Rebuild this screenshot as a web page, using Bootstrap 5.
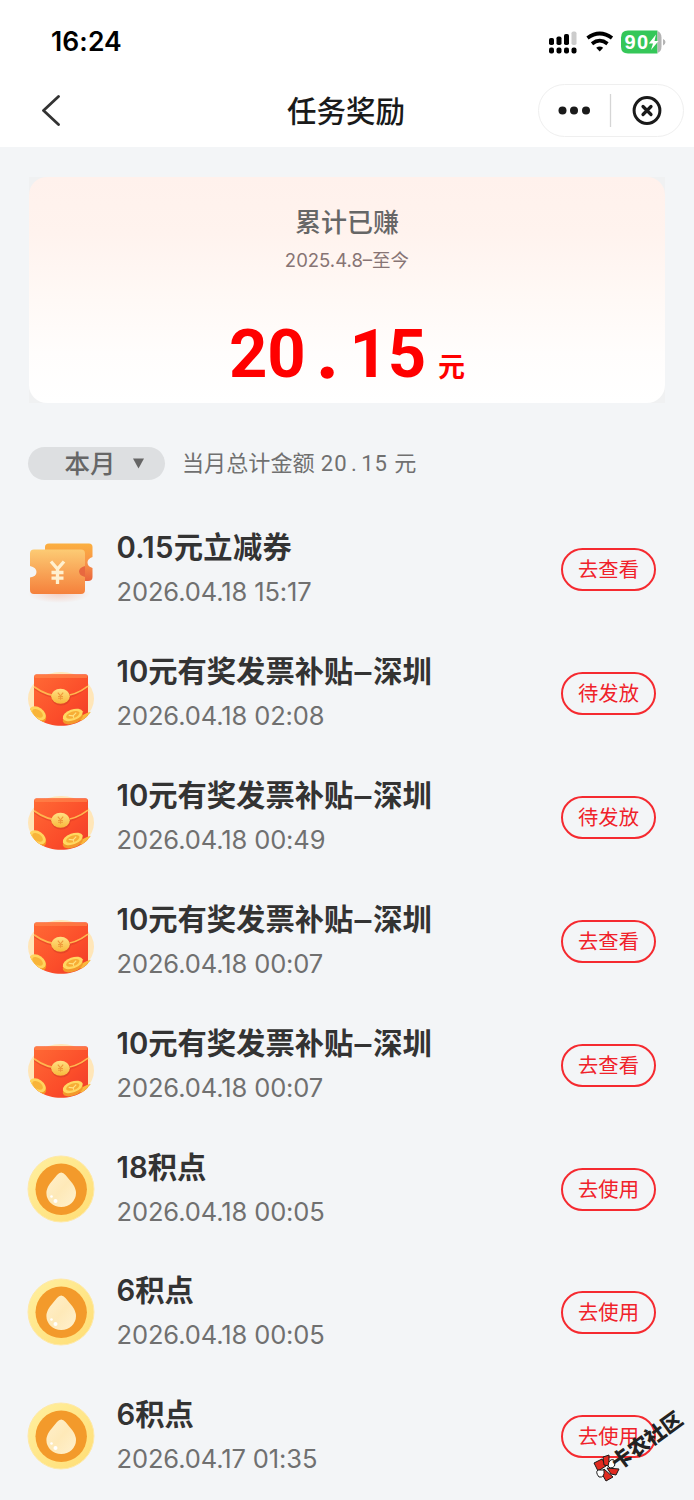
<!DOCTYPE html>
<html lang="zh-CN">
<head>
<meta charset="utf-8">
<meta name="viewport" content="width=device-width, initial-scale=1">
<title>任务奖励</title>
<link href="https://cdn.jsdelivr.net/npm/bootstrap@5.3.0/dist/css/bootstrap.min.css" rel="stylesheet">
<style>
body{background:#f3f5f7;font-family:Inter,"Noto Sans CJK SC",sans-serif;color:#333;line-height:1;overflow-x:hidden}
.screen{width:694px;height:1500px}
.topbar{height:147px}
.status{height:83px;padding:0 28px 0 51px}
.clock{font-size:26.5px;font-weight:600;color:#000;letter-spacing:.1px}
.titlebar{height:54px;margin-top:1px}
.page-title{font-size:29.5px;font-weight:500;color:#1a1a1a;line-height:54px;margin-right:2px}
.back{left:40px;top:11px}
.capsule{right:10px;top:0;width:146px;height:53px;border:1.5px solid #efefef;border-radius:27px}
.earned-wrap{margin:30px 29px 0;background:#f0f1f2;height:226px}
.earned{height:226px;border-radius:18px;background:linear-gradient(#fff1ec 0%,#fff3ee 25%,#fff9f6 55%,#fffdfc 78%,#fff 100%);padding-top:32px}
.earned-label{font-size:26px;line-height:28px;font-weight:500;color:#666}
.earned-since{font-size:18.5px;line-height:24px;margin-top:11px;color:#877474}
.amount{color:#f00;margin-top:37px;height:90px}
.amount-num{font:700 67px/90px Roboto,sans-serif;letter-spacing:-.2px}
.cell-dot{display:inline-block;width:44px;text-align:center;letter-spacing:0;-webkit-text-stroke:2.5px #f00}
.amount-unit{font-size:27px;font-weight:700;margin-left:12px}
.filter{height:33px;margin:44px 28px 0}
.month{width:137px;height:33px;border-radius:17px;background:#dddfe1;color:#666;font-size:25.5px;font-weight:500;padding-left:36.5px}
.tri{width:11px;height:11px;margin-left:17px;margin-top:-1px}
.sum{font-size:22.1px;margin-left:17px;color:#707070;white-space:pre}
.sum-num{font-family:Roboto,sans-serif;letter-spacing:1px}
.sum-dot{display:inline-block;width:13.500px;text-align:center}
.tasks{margin-top:27.3px}
.task{height:123.87px;padding:0 38px 0 27px}
.task-icon{width:68px;height:80px;margin-top:22px}
.task-body{margin-left:21.5px;padding-top:20px}
.task-name{font-size:29.3px;line-height:42px;font-weight:600;white-space:nowrap}
.short-name{letter-spacing:.3px}
.dash{display:inline-block;width:20px;text-align:center;transform:scaleX(1.15)}
.task-time{font-size:25.5px;line-height:30px;letter-spacing:-.12px;margin-top:8px;color:#707070;white-space:nowrap}
.btn-task{width:95px;height:43px;margin-top:41px;border:2px solid #f52a30;border-radius:22px;color:#f0222a;font-size:20.3px;line-height:39px;padding:0}
.mark-layer{left:585px;top:1395px;width:109px;height:100px;pointer-events:none}
.mark-text{position:absolute;left:29px;top:60px;font-size:20.5px;line-height:20px;font-weight:900;color:#222;transform:rotate(-36deg);transform-origin:0 50%;white-space:nowrap}
</style>
</head>
<body>
<svg width="0" height="0" class="position-absolute" aria-hidden="true">
<defs>
<linearGradient id="tb" x1="0" y1="0" x2="0" y2="1"><stop offset="0" stop-color="#fbb040"/><stop offset=".5" stop-color="#f89448"/><stop offset="1" stop-color="#e9643c"/></linearGradient>
<linearGradient id="tf" x1="0" y1="0" x2="0" y2="1"><stop offset="0" stop-color="#fccb74"/><stop offset="1" stop-color="#f5803b"/></linearGradient>
<linearGradient id="rd" x1="0" y1="0" x2="1" y2="1"><stop offset="0" stop-color="#ff6a35"/><stop offset=".6" stop-color="#fb4d2a"/><stop offset="1" stop-color="#ee3a2a"/></linearGradient>
<linearGradient id="gd" x1="0" y1="0" x2="0" y2="1"><stop offset="0" stop-color="#ffe184"/><stop offset="1" stop-color="#f8b93c"/></linearGradient>
<linearGradient id="dp" x1="0" y1="0" x2="1" y2="1"><stop offset="0" stop-color="#fff0cc"/><stop offset=".5" stop-color="#fee9b8"/><stop offset="1" stop-color="#fff1cf"/></linearGradient>
<linearGradient id="ring" x1="0" y1="0" x2="1" y2="1"><stop offset="0" stop-color="#fff0a0"/><stop offset="1" stop-color="#ffdd74"/></linearGradient>
<radialGradient id="sh"><stop offset="0" stop-color="#f5a58a" stop-opacity=".45"/><stop offset="1" stop-color="#f5a58a" stop-opacity="0"/></radialGradient>
<clipPath id="pc"><path d="M0 0H68V42C64 58 50 65.500 34 65.500S4 58 1 42Z"/></clipPath>
<symbol id="ticket" viewBox="0 0 68 80">
<ellipse cx="32" cy="65" rx="31" ry="9" fill="url(#sh)"/>
<g transform="translate(0 -1)">
<path d="M22 15.500H62Q65.500 15.500 65.500 19V29Q60.500 30.500 60.500 34.500T65.500 40V49Q65.500 53 61 53H22Q18 53 18 49V19Q18 15.500 22 15.500Z" fill="url(#tb)"/>
<path d="M58 37Q52 39 52 43T58 50Z" fill="#e8683f"/>
<path d="M7 21.500H54Q58 21.500 58 25.500V38Q52 39.500 52 43.500T58 49V62Q58 66 54 66H7Q3 66 3 62V49.500Q9.500 48.500 9.500 44T3 38V25.500Q3 21.500 7 21.500Z" fill="url(#tf)"/>
<path d="M24 33.500L30.500 41L37 33.500M30.500 41V56M24.500 44.500H36.500M24.500 50.200H36.500" fill="none" stroke="#fff0cf" stroke-width="3.300"/>
</g>
</symbol>
<symbol id="packet" viewBox="0 0 68 80">
<g transform="translate(0 1.200)">
<ellipse cx="34" cy="44.500" rx="33" ry="26.800" fill="#ffe6b8"/>
<g transform="translate(0 6)"><g clip-path="url(#pc)">
<path d="M7 17Q7 14 9.500 14H58.500Q61 14 61 17V68H7Z" fill="url(#rd)"/>
<path d="M8 16.200H60" stroke="#ff8a50" stroke-width="3" opacity=".6"/>
<path d="M7 26Q19 35 34 36Q50 36 61 25L61 27Q50 38 34 39Q19 38 7 29Z" fill="#d93a25" opacity=".45"/>
<path d="M7 26.500Q20 36 34 36T61 26" fill="none" stroke="#ffb64f" stroke-width="1.700"/>
<g transform="rotate(35 10 54)"><ellipse cx="11" cy="54.500" rx="9.500" ry="6.500" fill="#f59a24"/><ellipse cx="10" cy="53" rx="9" ry="6" fill="#ffd55e"/><ellipse cx="10" cy="53" rx="6" ry="3.500" fill="#f8b439"/></g>
<g transform="rotate(-20 48 55)"><ellipse cx="60" cy="61" rx="9" ry="4" fill="#f9b83d"/><ellipse cx="45" cy="57" rx="10.500" ry="5.500" fill="#f3992b"/><ellipse cx="46" cy="54" rx="10.500" ry="5.500" fill="#ffd861"/><ellipse cx="46" cy="54" rx="7" ry="3.300" fill="#f7ad35"/><path d="M42 53l4 2 4-2M46 55v2" stroke="#ffe182" stroke-width="1.200" fill="none"/></g>
</g></g>
<ellipse cx="34" cy="43.500" rx="9.500" ry="7.800" fill="#cf3b23" opacity=".5"/>
<ellipse cx="33.500" cy="42" rx="9.300" ry="7.500" fill="url(#gd)"/>
<path d="M30.800 38.500l2.700 3.200 2.700-3.200M33.500 41.700V45.500M31 42.300h5M31 44h5" stroke="#ef9a3c" stroke-width="1.100" fill="none"/>
</g>
</symbol>
<symbol id="coin" viewBox="0 0 68 80">
<circle cx="34" cy="40" r="33" fill="url(#ring)" stroke="#ffe9a8" stroke-width="1"/>
<circle cx="34.200" cy="40.300" r="25.700" fill="#f39a2b"/>
<path d="M34.200 23.500Q36.500 23.500 38.500 26L45.500 34.500Q49 39.500 49 44A14.800 14 0 0 1 19.400 44Q19.400 39.500 23 34.500L30 26Q32 23.500 34.200 23.500Z" fill="url(#dp)"/>
<circle cx="24.500" cy="47.500" r="1.300" fill="#fff"/><circle cx="28.500" cy="52" r="2" fill="#fff"/>
</symbol>
</defs>
</svg>
<main class="screen position-relative overflow-hidden">
<header class="topbar bg-white d-flex flex-column">
<div class="status d-flex align-items-center justify-content-between">
<span class="clock">16:24</span>
<svg width="118" height="28" viewBox="548 27.500 118 28">
<g fill="#000"><rect x="549" y="37.500" width="5" height="7" rx="1.800"/><rect x="556.500" y="36" width="5" height="8.500" rx="1.800"/><rect x="564" y="33.500" width="5" height="11" rx="1.800"/><rect x="549" y="47" width="5" height="6" rx="2"/><rect x="556.500" y="47" width="5" height="6" rx="2"/><rect x="564" y="47" width="5" height="6" rx="2"/><rect x="571.500" y="47" width="5" height="6" rx="2"/></g>
<rect x="571.500" y="31" width="5" height="13.500" rx="1.800" fill="#ccc"/>
<g fill="none" stroke="#000" stroke-width="3.700"><path d="M587.500 37.600Q599.700 28.400 612 37.600"/><path d="M592 43.200Q599.700 37.200 607.500 43.200"/></g><path d="M596.200 47.300Q599.700 44.500 603.200 47.300L599.700 51Z"/>
<path d="M628 30H657.500V53H628Q621 53 621 46V37Q621 30 628 30Z" fill="#35c759"/><path d="M657.500 30.500Q661.500 32 661.500 37V46Q661.500 51 657.500 52.500Z" fill="#b4b4b4"/><path d="M663 38.500Q665.500 39.500 665.500 41.500T663 45Z" fill="#b4b4b4"/>
<text x="624.500" y="48.400" font-family="'Liberation Sans',sans-serif" font-size="20" font-weight="700" fill="#fff" textLength="23.500">90</text>
<path d="M656 34L648.800 43H653L651 49.500L658.500 40.500H654.500Z" fill="#fff"/>
</svg>
</div>
<div class="titlebar position-relative text-center">
<svg class="back position-absolute" width="22" height="32" viewBox="0 0 22 32"><path d="M18.500 1.500L3.500 15.500L18.500 29.500" fill="none" stroke="#333" stroke-width="2.800" stroke-linecap="round" stroke-linejoin="round"/></svg>
<span class="page-title">任务奖励</span>
<div class="capsule position-absolute"><svg class="d-block" width="143" height="50" viewBox="539 85 143 50"><g fill="#1a1a1a"><circle cx="562.500" cy="110.500" r="4"/><circle cx="574" cy="110.500" r="4"/><circle cx="586" cy="110.500" r="4"/></g><path d="M610.500 94V127" stroke="#d5d5d5" stroke-width="1.300"/><circle cx="647" cy="110.500" r="12.900" fill="none" stroke="#1a1a1a" stroke-width="3"/><path d="M643 106.500L651 114.500M651 106.500L643 114.500" stroke="#1a1a1a" stroke-width="3.200" stroke-linecap="round"/></svg></div>
</div>
</header>
<section class="earned-wrap">
<div class="earned text-center">
<div class="earned-label">累计已赚</div>
<div class="earned-since">2025.4.8–至今</div>
<div class="amount d-flex justify-content-center align-items-baseline"><span class="amount-num">20<span class="cell-dot">.</span>15</span><span class="amount-unit">元</span></div>
</div>
</section>
<div class="filter d-flex align-items-center">
<div class="month d-flex align-items-center">本月<svg class="tri" viewBox="0 0 11 10"><path d="M0 0H11L5.500 10Z" fill="#666"/></svg></div>
<div class="sum">当月总计金额 <span class="sum-num">20<span class="sum-dot">.</span>15</span> 元</div>
</div>
<section class="tasks">
<article class="task d-flex align-items-start"><svg class="task-icon flex-shrink-0"><use href="#ticket"/></svg><div class="task-body flex-grow-1"><div class="task-name short-name">0.15元立减券</div><div class="task-time">2026.04.18 15:17</div></div><button class="btn btn-task flex-shrink-0">去查看</button></article>
<article class="task d-flex align-items-start"><svg class="task-icon flex-shrink-0"><use href="#packet"/></svg><div class="task-body flex-grow-1"><div class="task-name">10元有奖发票补贴<span class="dash">–</span>深圳</div><div class="task-time">2026.04.18 02:08</div></div><button class="btn btn-task flex-shrink-0">待发放</button></article>
<article class="task d-flex align-items-start"><svg class="task-icon flex-shrink-0"><use href="#packet"/></svg><div class="task-body flex-grow-1"><div class="task-name">10元有奖发票补贴<span class="dash">–</span>深圳</div><div class="task-time">2026.04.18 00:49</div></div><button class="btn btn-task flex-shrink-0">待发放</button></article>
<article class="task d-flex align-items-start"><svg class="task-icon flex-shrink-0"><use href="#packet"/></svg><div class="task-body flex-grow-1"><div class="task-name">10元有奖发票补贴<span class="dash">–</span>深圳</div><div class="task-time">2026.04.18 00:07</div></div><button class="btn btn-task flex-shrink-0">去查看</button></article>
<article class="task d-flex align-items-start"><svg class="task-icon flex-shrink-0"><use href="#packet"/></svg><div class="task-body flex-grow-1"><div class="task-name">10元有奖发票补贴<span class="dash">–</span>深圳</div><div class="task-time">2026.04.18 00:07</div></div><button class="btn btn-task flex-shrink-0">去查看</button></article>
<article class="task d-flex align-items-start"><svg class="task-icon flex-shrink-0"><use href="#coin"/></svg><div class="task-body flex-grow-1"><div class="task-name">18积点</div><div class="task-time">2026.04.18 00:05</div></div><button class="btn btn-task flex-shrink-0">去使用</button></article>
<article class="task d-flex align-items-start"><svg class="task-icon flex-shrink-0"><use href="#coin"/></svg><div class="task-body flex-grow-1"><div class="task-name">6积点</div><div class="task-time">2026.04.18 00:05</div></div><button class="btn btn-task flex-shrink-0">去使用</button></article>
<article class="task d-flex align-items-start"><svg class="task-icon flex-shrink-0"><use href="#coin"/></svg><div class="task-body flex-grow-1"><div class="task-name">6积点</div><div class="task-time">2026.04.17 01:35</div></div><button class="btn btn-task flex-shrink-0">去使用</button></article>
</section>
<div class="mark-layer position-absolute">
<svg class="position-absolute top-0 start-0" width="109" height="100" viewBox="585 1395 109 100"><g stroke="#1a1a1a" stroke-width="1"><path d="M594 1463L602 1459L606 1466L598 1471Z" fill="#e02a20"/><path d="M603 1457L609 1455L609 1466L604 1465Z" fill="#e02a20"/><path d="M607 1468L619 1469L616 1475L611 1474Z" fill="#e02a20"/><path d="M604 1469L613 1477L606 1481L602 1474Z" fill="#e02a20"/><path d="M608 1466Q609 1458 614 1460Q617 1468 610 1468Z" fill="#fff"/><path d="M604 1470Q605 1478 599 1477Q595 1472 598 1470Z" fill="#fff"/></g></svg>
<span class="mark-text">卡农社区</span>
</div>
</main>
<script src="https://cdn.jsdelivr.net/npm/bootstrap@5.3.0/dist/js/bootstrap.bundle.min.js"></script>
</body>
</html>
